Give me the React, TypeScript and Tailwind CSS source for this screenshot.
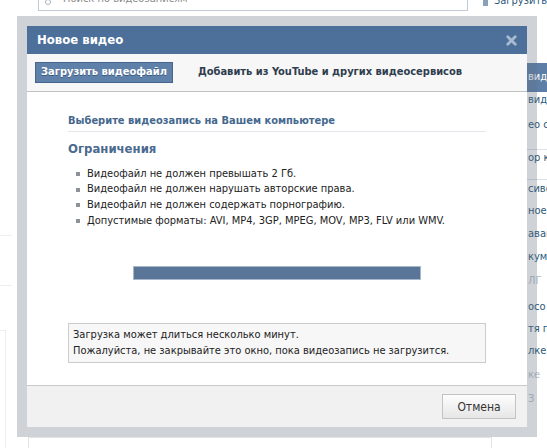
import { X } from 'lucide-react';

const RULES = [
  'Видеофайл не должен превышать 2 Гб.',
  'Видеофайл не должен нарушать авторские права.',
  'Видеофайл не должен содержать порнографию.',
  'Допустимые форматы: AVI, MP4, 3GP, MPEG, MOV, MP3, FLV или WMV.',
];

export default function App() {
  return (
    <div className="relative w-[547px] h-[448px] overflow-hidden bg-white font-['DejaVu_Sans_Condensed','DejaVu_Sans',sans-serif] text-[11px]">
      {/* page behind the dialog */}
      <div className="flex h-full">
        <div className="w-[38px] shrink-0 flex flex-col">
          <div className="h-[235px]" />
          <div className="h-[50px] border-t border-[#eeeeee] w-[12px]" />
          <div className="border-t border-[#eeeeee] w-[12px] h-[45px]" />
          <div className="border-t border-r border-[#eeeeee] w-[6px] flex-1" />
        </div>
        <div className="w-[445px] shrink-0 flex flex-col">
          <div className="w-[430px] h-[26px] -mt-[15px] border border-[#c0cad5] bg-white flex items-end gap-[8px] pl-[6px] pb-[3px] text-[#8a8a8a] text-[11px]">
            <span className="w-[10px] h-[8px] mb-[2px] flex items-end">
              <span className="w-[6px] h-[6px] rounded-full border border-[#aab4bf]" />
            </span>
            <span>Поиск по видеозаписям</span>
          </div>
          <div className="flex-1" />
          <div className="ml-[-10px] w-[464px] h-[11px] border-l border-r border-t border-[#e4e4e4]" />
        </div>
        <div className="w-[64px] shrink-0 flex flex-col text-[11px] whitespace-nowrap overflow-hidden">
          <div className="h-[6px] flex items-end gap-[6px] overflow-visible">
            <span className="w-[7px] h-[6px] bg-[#8aa0b8]" />
            <span className="text-[#2b587a] leading-[12px] -mb-[1px]">Загрузить</span>
          </div>
          <div className="h-[57px]" />
          <div className="h-[29px] bg-[#5d7fa7] text-white flex items-center pl-[45px]">видео</div>
          <div className="h-[16px] flex items-center pl-[45px] text-[#2b587a]">видео</div>
          <div className="h-[34px] flex items-center pl-[45px] text-[#2b587a]">ео с</div>
          <div className="h-[8px] border-b border-[#dae1e8]" />
          <div className="h-[16px] flex items-center pl-[45px] text-[#2b587a]">ор к</div>
          <div className="h-[14px] border-b border-[#dae1e8]" />
          <div className="h-[18px] flex items-center pl-[45px] text-[#2b587a]">сиво</div>
          <div className="h-[26px] flex items-center pl-[45px] text-[#2b587a]">ное</div>
          <div className="h-[20px] flex items-center pl-[45px] text-[#2b587a]">авай</div>
          <div className="h-[26px] flex items-center pl-[45px] text-[#2b587a]">куме</div>
          <div className="h-[22px] flex items-center pl-[45px] text-[#b8c2cc]">ЛГ</div>
          <div className="h-[30px] flex items-center pl-[45px] text-[#2b587a]">осо</div>
          <div className="h-[14px] flex items-center pl-[45px] text-[#2b587a]">тя го</div>
          <div className="h-[30px] flex items-center pl-[45px] text-[#2b587a]">лке</div>
          <div className="h-[18px] flex items-center pl-[45px] text-[#b8c2cc]">ке</div>
          <div className="h-[30px] flex items-center pl-[45px] text-[#b8c2cc]">З</div>
        </div>
      </div>

      {/* dialog */}
      <div className="absolute left-[17px] top-[16px] w-[520px] h-[421px] p-[10px] bg-[rgba(95,108,125,0.3)]">
        <div className="flex flex-col h-full bg-white">
          <div className="h-[28px] bg-[#4c709a] flex items-center justify-between pl-[10px] pr-[8px]">
            <span className="text-white font-bold text-[13px]">Новое видео</span>
            <X className="w-[15px] h-[15px] text-[#a9bbd0]" strokeWidth={4.5} />
          </div>

          <div className="h-[38px] bg-[#f7f7f7] border-b border-[#c3c3c3] flex items-center pl-[8px] gap-[25px]">
            <div className="h-[21px] px-[5px] flex items-center bg-[#5f80a9] border border-[#46658d] text-white font-bold [text-shadow:0_1px_0_#3d5a80]">
              Загрузить видеофайл
            </div>
            <span className="font-bold text-[#2f3d4e]">Добавить из YouTube и других видеосервисов</span>
          </div>

          <div className="flex-1 flex flex-col px-[41px] pt-[21px]">
            <div className="font-bold text-[#45688e] pb-[1px] border-b border-[#e3e6ea]">
              Выберите видеозапись на Вашем компьютере
            </div>
            <div className="font-bold text-[13px] text-[#4a6a8e] mt-[7px]">Ограничения</div>
            <ul className="mt-[8px] flex flex-col pl-[8px]">
              {RULES.map((r) => (
                <li key={r} className="flex items-center gap-[7px] h-[15.7px] text-[#222222]">
                  <span className="w-[4px] h-[4px] bg-[#8d9298] shrink-0" />
                  {r}
                </li>
              ))}
            </ul>
            <div className="mt-[37px] self-center w-[288px] h-[14px] bg-[#597699] border border-[#a7b6c8]" />
            <div className="mt-[43px] border border-[#cccccc] bg-[#f7f7f7] px-[4px] py-[3px] leading-[16px] text-[#222222]">
              <div>Загрузка может длиться несколько минут.</div>
              <div>Пожалуйста, не закрывайте это окно, пока видеозапись не загрузится.</div>
            </div>
          </div>

          <div className="h-[42px] bg-[#f1f1f1] border-t border-[#c9c9c9] flex items-center justify-end pr-[11px]">
            <button className="w-[74px] h-[25px] border border-[#c3c3c3] bg-gradient-to-b from-[#fdfdfd] to-[#e6e6e6] text-[12px] text-[#333333]">
              Отмена
            </button>
          </div>
        </div>
      </div>
    </div>
  );
}
